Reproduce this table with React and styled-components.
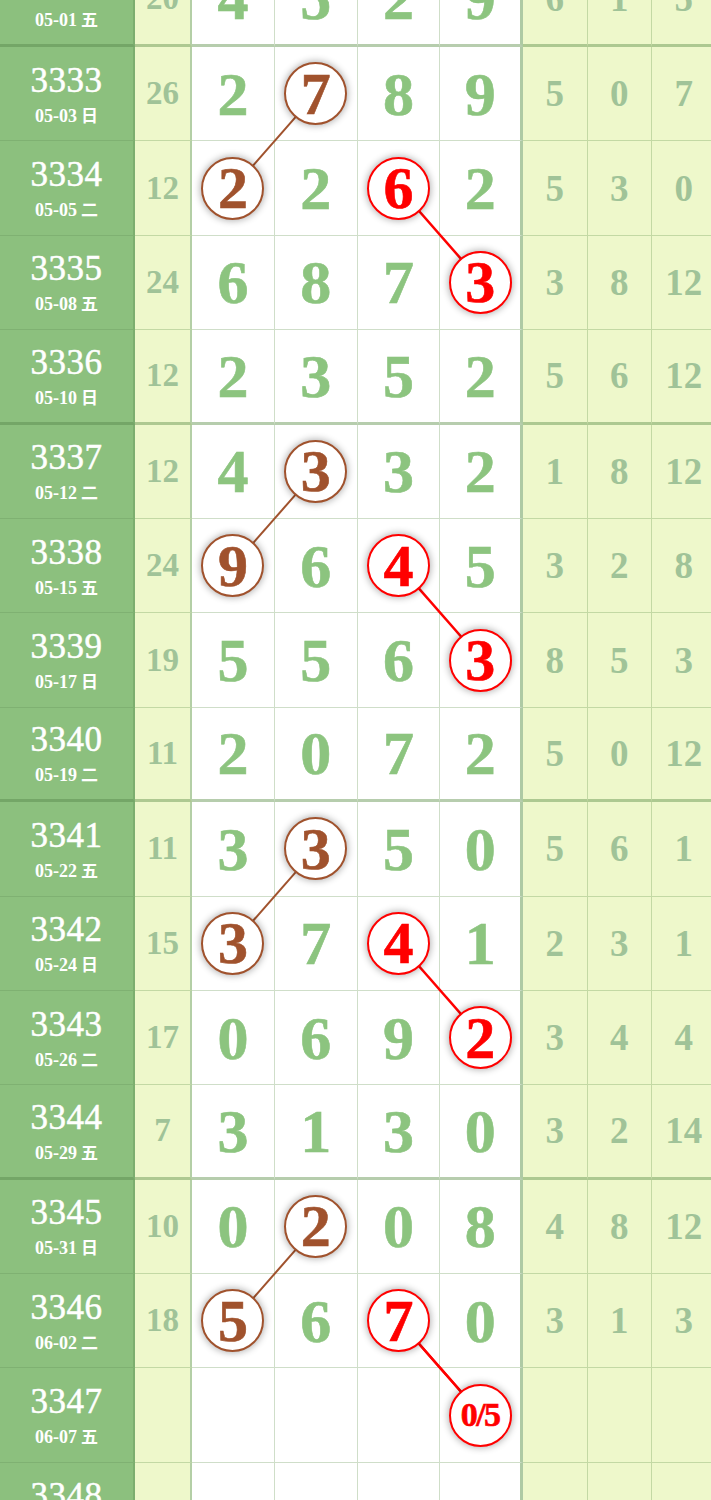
import React from 'react';
import styled, { createGlobalStyle } from 'styled-components';

const GlobalStyle = createGlobalStyle`
  html, body {
    margin: 0;
    padding: 0;
    overflow: hidden;
    background: #fff;
  }
  body {
    font-family: "Liberation Serif", "Noto Sans CJK SC", serif;
  }
`;

const ROW_H = 94.4;
const COLS = [135, 57, 82.75, 82.75, 82.75, 82.75, 64.5, 64.5, 64.5];
const DIGIT_X0 = 192;
const DIGIT_W = 82.75;

const BROWN = '#a0522d';
const RED = '#ff0000';

// the draw list, index 0 is 3332 which is scrolled half out of view
const rows = [
  { no: '3332', date: '05-01', wk: '五', sum: 20, d: [4, 5, 2, 9], r: [6, 1, 5] },
  { no: '3333', date: '05-03', wk: '日', sum: 26, d: [2, 7, 8, 9], r: [5, 0, 7] },
  { no: '3334', date: '05-05', wk: '二', sum: 12, d: [2, 2, 6, 2], r: [5, 3, 0] },
  { no: '3335', date: '05-08', wk: '五', sum: 24, d: [6, 8, 7, 3], r: [3, 8, 12] },
  { no: '3336', date: '05-10', wk: '日', sum: 12, d: [2, 3, 5, 2], r: [5, 6, 12] },
  { no: '3337', date: '05-12', wk: '二', sum: 12, d: [4, 3, 3, 2], r: [1, 8, 12] },
  { no: '3338', date: '05-15', wk: '五', sum: 24, d: [9, 6, 4, 5], r: [3, 2, 8] },
  { no: '3339', date: '05-17', wk: '日', sum: 19, d: [5, 5, 6, 3], r: [8, 5, 3] },
  { no: '3340', date: '05-19', wk: '二', sum: 11, d: [2, 0, 7, 2], r: [5, 0, 12] },
  { no: '3341', date: '05-22', wk: '五', sum: 11, d: [3, 3, 5, 0], r: [5, 6, 1] },
  { no: '3342', date: '05-24', wk: '日', sum: 15, d: [3, 7, 4, 1], r: [2, 3, 1] },
  { no: '3343', date: '05-26', wk: '二', sum: 17, d: [0, 6, 9, 2], r: [3, 4, 4] },
  { no: '3344', date: '05-29', wk: '五', sum: 7, d: [3, 1, 3, 0], r: [3, 2, 14] },
  { no: '3345', date: '05-31', wk: '日', sum: 10, d: [0, 2, 0, 8], r: [4, 8, 12] },
  { no: '3346', date: '06-02', wk: '二', sum: 18, d: [5, 6, 7, 0], r: [3, 1, 3] },
  { no: '3347', date: '06-07', wk: '五', sum: '', d: ['', '', '', '0/5'], r: ['', '', ''] },
  { no: '3348', date: '06-09', wk: '日', sum: '', d: ['', '', '', ''], r: ['', '', ''] },
];

// each group of four: brown pair on top, red pair one row lower
const links = [1, 5, 9, 13].flatMap((s) => [
  { color: BROWN, a: [s, 1], b: [s + 1, 0], w: 2 },
  { color: RED, a: [s + 1, 2], b: [s + 2, 3], w: 2.5 },
]);

const markAt = (row, col) => {
  for (const l of links) {
    if ((l.a[0] === row && l.a[1] === col) || (l.b[0] === row && l.b[1] === col)) return l.color;
  }
  return null;
};

const isGroupEnd = (i) => i % 4 === 0;

const Page = styled.div`
  width: 711px;
  height: 1500px;
  overflow: hidden;
`;

const Table = styled.div`
  position: relative;
  margin-top: -47.4px;
  display: grid;
  grid-template-columns: ${COLS.map((c) => `${c}px`).join(' ')};
  grid-auto-rows: ${ROW_H}px;
  width: ${COLS.reduce((a, b) => a + b, 0)}px;
`;

const Cell = styled.div`
  box-sizing: border-box;
  display: flex;
  align-items: center;
  justify-content: center;
  border-bottom: ${({ $thick }) =>
    $thick ? '3px solid rgba(95, 145, 75, 0.45)' : '1px solid rgba(95, 145, 75, 0.3)'};
`;

const IssueCell = styled(Cell)`
  flex-direction: column;
  background: #8cc07e;
  color: #fff;
  border-right: 2px solid #7cae6f;
  border-bottom-color: ${({ $thick }) => ($thick ? '#74a667' : '#7fb172')};
`;

const IssueNo = styled.div`
  font-size: 35px;
  letter-spacing: 0.5px;
  line-height: 1;
  margin-bottom: 8px;
  -webkit-text-stroke: 0.5px #fff;
`;

const IssueDate = styled.div`
  font-size: 18px;
  font-weight: bold;
  line-height: 1;
  white-space: nowrap;
`;

const Week = styled.span`
  font-family: "Noto Sans CJK SC", sans-serif;
  font-size: 17px;
  margin-left: 4px;
`;

const SumCell = styled(Cell)`
  background: #eef8cb;
  color: #a0c398;
  font-size: 33px;
  font-weight: bold;
  border-right: 2px solid #b4cfa6;
`;

const DigitCell = styled(Cell)`
  background: #fff;
  color: #8cc47f;
  font-size: 62px;
  font-weight: bold;
  line-height: 1;
  -webkit-text-stroke: 0.6px #8cc47f;
  border-right: ${({ $last }) =>
    $last ? '3px solid rgba(95, 150, 75, 0.5)' : '1px solid rgba(95, 145, 75, 0.3)'};
`;

const ExtraCell = styled(Cell)`
  background: #eef8cb;
  color: #a0c398;
  font-size: 37px;
  font-weight: bold;
  border-right: 1px solid rgba(95, 145, 75, 0.3);
`;

const Ball = styled.span`
  position: relative;
  z-index: 2;
  box-sizing: border-box;
  width: 63px;
  height: 63px;
  border-radius: 50%;
  border: 2.5px solid ${({ $color }) => $color};
  color: ${({ $color }) => $color};
  -webkit-text-stroke: 0.6px ${({ $color }) => $color};
  background: #fff;
  box-shadow: 0 0 7px 1px rgba(0, 0, 0, 0.3);
  display: flex;
  align-items: center;
  justify-content: center;
  font-size: ${({ $small }) => ($small ? '34px' : '60px')};
  letter-spacing: ${({ $small }) => ($small ? '-1.5px' : '0')};
  line-height: 1;
`;

const Links = styled.svg`
  position: absolute;
  left: 0;
  top: 0;
  z-index: 1;
  pointer-events: none;
`;

const cx = (c) => DIGIT_X0 + DIGIT_W * c + DIGIT_W / 2;
const cy = (r) => ROW_H * r + ROW_H / 2 - 1;

const App = () => {
  const totalW = COLS.reduce((a, b) => a + b, 0);
  const totalH = ROW_H * rows.length;

  return (
    <Page>
      <GlobalStyle />
      <Table>
        {rows.map((row, i) => {
          const thick = isGroupEnd(i);
          return (
            <React.Fragment key={row.no}>
              <IssueCell $thick={thick}>
                <IssueNo>{row.no}</IssueNo>
                <IssueDate>
                  {row.date}
                  <Week>{row.wk}</Week>
                </IssueDate>
              </IssueCell>
              <SumCell $thick={thick}>{row.sum}</SumCell>
              {row.d.map((v, c) => {
                const mark = markAt(i, c) || (v === '0/5' ? RED : null);
                return (
                  <DigitCell key={c} $thick={thick} $last={c === 3}>
                    {mark ? (
                      <Ball $color={mark} $small={String(v).length > 1}>
                        {v}
                      </Ball>
                    ) : (
                      v
                    )}
                  </DigitCell>
                );
              })}
              {row.r.map((v, c) => (
                <ExtraCell key={`r${c}`} $thick={thick}>
                  {v}
                </ExtraCell>
              ))}
            </React.Fragment>
          );
        })}
        <Links width={totalW} height={totalH}>
          {links.map((l, k) => (
            <line
              key={k}
              x1={cx(l.a[1])}
              y1={cy(l.a[0])}
              x2={cx(l.b[1])}
              y2={cy(l.b[0])}
              stroke={l.color}
              strokeWidth={l.w}
            />
          ))}
          <line x1={cx(2)} y1={cy(14)} x2={cx(3)} y2={cy(15)} stroke={RED} strokeWidth={2.5} />
        </Links>
      </Table>
    </Page>
  );
};

export default App;
